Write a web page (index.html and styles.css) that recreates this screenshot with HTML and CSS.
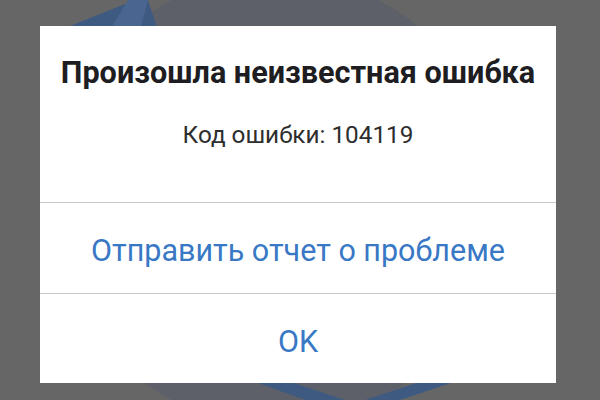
FILE: index.html
```html
<!DOCTYPE html>
<html lang="ru">
<head>
<meta charset="utf-8">
<link rel="stylesheet" href="styles.css">
</head>
<body>
<div class="screen">
  <svg class="backdrop" width="600" height="400" viewBox="0 0 600 400">
    <circle cx="275" cy="200" r="225" fill="#5d6068"/>
    <polygon points="60,30 135,0 148,0 158,30" fill="#3f5a80"/>
    <polygon points="128,0 148,0 140,30 110,30" fill="#4a6690"/>
    <polygon points="250,380 285,380 345,400 305,400" fill="#3f5a80"/>
    <polygon points="425,380 460,380 400,400 365,400" fill="#3f5a80"/>
  </svg>
  <div class="dialog">
    <div class="body">
      <div class="title">Произошла неизвестная ошибка</div>
      <div class="code">Код ошибки: 104119</div>
    </div>
    <div class="action action-report">Отправить отчет о проблеме</div>
    <div class="action action-ok">OK</div>
  </div>
</div>
</body>
</html>
```
FILE: styles.css
```css
html, body {
  margin: 0;
  padding: 0;
}
body {
  width: 600px;
  height: 400px;
  overflow: hidden;
  background: #666666;
  font-family: Roboto, "Noto Sans", sans-serif;
}
.screen {
  position: relative;
  width: 600px;
  height: 400px;
  padding-top: 26px;
  box-sizing: border-box;
}
.backdrop {
  position: absolute;
  left: 0;
  top: 0;
}
.dialog {
  position: relative;
  margin-left: 40px;
  width: 516px;
  height: 357px;
  background: #ffffff;
  display: flex;
  flex-direction: column;
}
.body {
  height: 177px;
  box-sizing: border-box;
  border-bottom: 1.5px solid #c9c9c9;
  display: flex;
  flex-direction: column;
  align-items: center;
  padding-top: 29px;
}
.title {
  font-size: 30.6px;
  font-weight: bold;
  color: #1d1d22;
  line-height: 36px;
  white-space: nowrap;
}
.code {
  margin-top: 30px;
  font-size: 24.3px;
  color: #2e2e2e;
  line-height: 28px;
}
.action {
  height: 90px;
  box-sizing: border-box;
  display: flex;
  align-items: center;
  justify-content: center;
  font-size: 30.5px;
  color: #3878c5;
  white-space: nowrap;
}
.action-report {
  padding-top: 4px;
}
.action-ok {
  padding-top: 6px;
  border-top: 1.5px solid #c9c9c9;
}
```
